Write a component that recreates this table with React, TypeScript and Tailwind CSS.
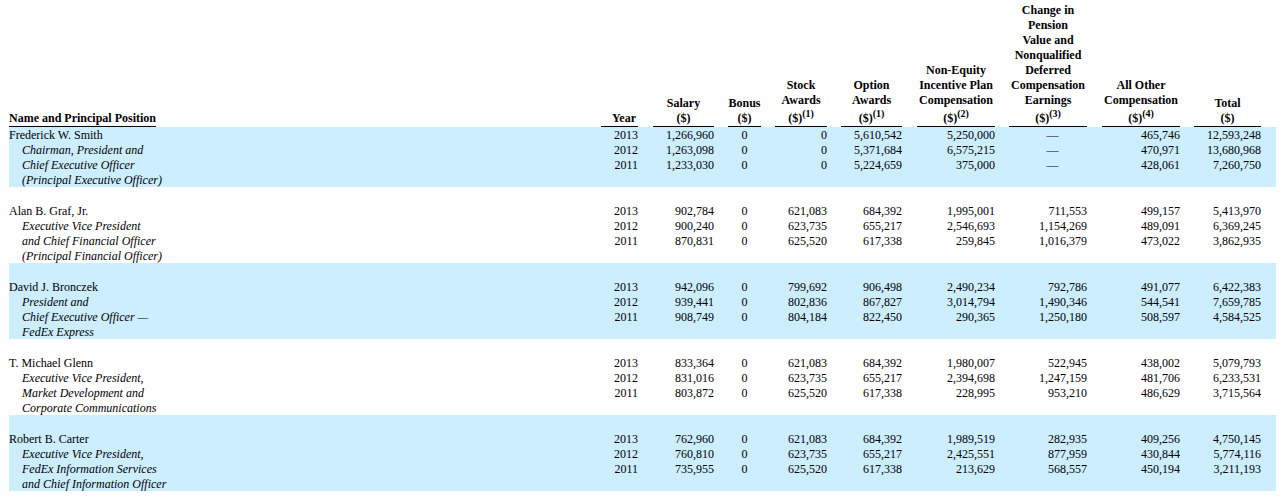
type Column = {
  key: string;
  cls: string;
  head: string[];
  note?: string;
  align: "right" | "center" | "dash";
};

const COLUMNS: Column[] = [
  { key: "year", cls: "w-[37px]", head: ["Year"], align: "right" },
  { key: "salary", cls: "ml-[15px] w-[61px]", head: ["Salary", "($)"], align: "right" },
  { key: "bonus", cls: "ml-[14px] w-[33px]", head: ["Bonus", "($)"], align: "center" },
  { key: "stock", cls: "ml-[14px] w-[52px]", head: ["Stock", "Awards", "($)"], note: "(1)", align: "right" },
  { key: "option", cls: "ml-[14px] w-[61px]", head: ["Option", "Awards", "($)"], note: "(1)", align: "right" },
  {
    key: "nonequity",
    cls: "ml-[15px] w-[78px]",
    head: ["Non-Equity", "Incentive Plan", "Compensation", "($)"],
    note: "(2)",
    align: "right",
  },
  {
    key: "pension",
    cls: "ml-[14px] w-[78px]",
    head: ["Change in", "Pension", "Value and", "Nonqualified", "Deferred", "Compensation", "Earnings", "($)"],
    note: "(3)",
    align: "dash",
  },
  { key: "other", cls: "ml-[15px] w-[78px]", head: ["All Other", "Compensation", "($)"], note: "(4)", align: "right" },
  { key: "total", cls: "ml-[14px] w-[67px]", head: ["Total", "($)"], align: "right" },
];

type Officer = {
  name: string;
  titles: string[];
  rows: string[][];
};

const OFFICERS: Officer[] = [
  {
    name: "Frederick W. Smith",
    titles: ["Chairman, President and", "Chief Executive Officer", "(Principal Executive Officer)"],
    rows: [
      ["2013", "1,266,960", "0", "0", "5,610,542", "5,250,000", "—", "465,746", "12,593,248"],
      ["2012", "1,263,098", "0", "0", "5,371,684", "6,575,215", "—", "470,971", "13,680,968"],
      ["2011", "1,233,030", "0", "0", "5,224,659", "375,000", "—", "428,061", "7,260,750"],
    ],
  },
  {
    name: "Alan B. Graf, Jr.",
    titles: ["Executive Vice President", "and Chief Financial Officer", "(Principal Financial Officer)"],
    rows: [
      ["2013", "902,784", "0", "621,083", "684,392", "1,995,001", "711,553", "499,157", "5,413,970"],
      ["2012", "900,240", "0", "623,735", "655,217", "2,546,693", "1,154,269", "489,091", "6,369,245"],
      ["2011", "870,831", "0", "625,520", "617,338", "259,845", "1,016,379", "473,022", "3,862,935"],
    ],
  },
  {
    name: "David J. Bronczek",
    titles: ["President and", "Chief Executive Officer —", "FedEx Express"],
    rows: [
      ["2013", "942,096", "0", "799,692", "906,498", "2,490,234", "792,786", "491,077", "6,422,383"],
      ["2012", "939,441", "0", "802,836", "867,827", "3,014,794", "1,490,346", "544,541", "7,659,785"],
      ["2011", "908,749", "0", "804,184", "822,450", "290,365", "1,250,180", "508,597", "4,584,525"],
    ],
  },
  {
    name: "T. Michael Glenn",
    titles: ["Executive Vice President,", "Market Development and", "Corporate Communications"],
    rows: [
      ["2013", "833,364", "0", "621,083", "684,392", "1,980,007", "522,945", "438,002", "5,079,793"],
      ["2012", "831,016", "0", "623,735", "655,217", "2,394,698", "1,247,159", "481,706", "6,233,531"],
      ["2011", "803,872", "0", "625,520", "617,338", "228,995", "953,210", "486,629", "3,715,564"],
    ],
  },
  {
    name: "Robert B. Carter",
    titles: ["Executive Vice President,", "FedEx Information Services", "and Chief Information Officer"],
    rows: [
      ["2013", "762,960", "0", "621,083", "684,392", "1,989,519", "282,935", "409,256", "4,750,145"],
      ["2012", "760,810", "0", "623,735", "655,217", "2,425,551", "877,959", "430,844", "5,774,116"],
      ["2011", "735,955", "0", "625,520", "617,338", "213,629", "568,557", "450,194", "3,211,193"],
    ],
  },
];

function HeaderCell({ col }: { col: Column }) {
  const last = col.head.length - 1;
  return (
    <div
      className={`${col.cls} flex flex-col justify-end border-b border-black font-bold ${
        col.key === "year" ? "text-right pr-[2px]" : "text-center"
      }`}
    >
      {col.head.map((line, i) =>
        i === last && col.note ? (
          <div key={i} className="pt-[3px] whitespace-nowrap">
            {line}
            <sup className="text-[10px] -top-[5px]">{col.note}</sup>
          </div>
        ) : (
          <div key={i} className="whitespace-nowrap">
            {line}
          </div>
        )
      )}
    </div>
  );
}

function ValueCell({ col, values }: { col: Column; values: string[] }) {
  return (
    <div className={`${col.cls} flex flex-col`}>
      {values.map((v, i) => {
        let align = "text-right";
        if (col.align === "center") align = "text-center";
        if (col.align === "dash" && v === "—") align = "text-center pl-[9px]";
        return (
          <div key={i} className={`${align} whitespace-nowrap`}>
            {v}
          </div>
        );
      })}
    </div>
  );
}

function OfficerBlock({ officer, index }: { officer: Officer; index: number }) {
  const shaded = index % 2 === 0;
  return (
    <div className={`${shaded ? "bg-[#cceeff]" : "bg-white"} ${index === 0 ? "" : "pt-[16px]"}`}>
      <div className="flex h-[60px] pt-[1px]">
        <div className="w-[592px] flex flex-col">
          <div className="whitespace-nowrap">{officer.name}</div>
          {officer.titles.map((t) => (
            <div key={t} className="pl-[13px] italic whitespace-nowrap">
              {t}
            </div>
          ))}
        </div>
        {COLUMNS.map((col, ci) => (
          <ValueCell key={col.key} col={col} values={officer.rows.map((r) => r[ci])} />
        ))}
      </div>
    </div>
  );
}

export default function App() {
  return (
    <div className="min-h-[501px] bg-white pl-[9px] font-['Liberation_Serif',_'Times_New_Roman',_serif] text-[12px] leading-[15px] text-black">
      <div className="w-[1267px]">
        <div className="flex h-[127px] items-end">
          <div className="w-[592px]">
            <span className="inline-block border-b border-black font-bold whitespace-nowrap">
              Name and Principal Position
            </span>
          </div>
          {COLUMNS.map((col) => (
            <HeaderCell key={col.key} col={col} />
          ))}
        </div>
        {OFFICERS.map((o, i) => (
          <OfficerBlock key={o.name} officer={o} index={i} />
        ))}
      </div>
    </div>
  );
}
